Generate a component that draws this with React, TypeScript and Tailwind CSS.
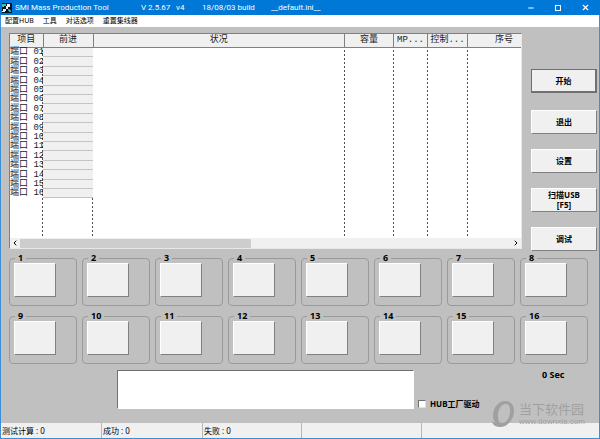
import { useState } from 'react'
import { ChevronLeft, ChevronRight, Minus, X } from 'lucide-react'

const MENUS = ['配置HUB', '工具', '对话选项', '重置集线器']
const PORTS = Array.from({ length: 16 }, (_, i) => i + 1)

const COLUMNS = [
  { label: '项目', width: 'w-[33px]' },
  { label: '前进', width: 'w-[50px]' },
  { label: '状况', width: '' },
  { label: '容量', width: 'w-[49px]' },
  { label: 'MP...', width: 'w-[34px]' },
  { label: '控制...', width: 'w-[40px]' },
  { label: '序号', width: 'w-[73px]' },
]

const STATUS = [
  { label: '测试计算 : 0', width: 'w-[101px]' },
  { label: '成功 : 0', width: 'w-[101px]' },
  { label: '失败 : 0', width: 'w-[99px]' },
  { label: '', width: 'w-[120px]' },
  { label: '', width: 'flex-1' },
]

const PUSH = 'border border-b-[#808080] border-l-white border-r-[#808080] border-t-white bg-[#f0f0f0]'

function AppIcon() {
  return (
    <svg viewBox="0 0 10 10" className="size-[10px] shrink-0">
      <rect width="10" height="10" fill="#06121f" />
      <path d="M0 1h4v2H2v1H0z" fill="#3cc0b8" />
      <path d="M5 1h3v3H6v2H4V3h1z" fill="#f2fbfb" />
      <path d="M1 6h3v2H3v1H0V8h1z" fill="#e4f3f3" />
      <path d="M6 6h2v1h1v2H7V8H6z" fill="#2f9fb4" />
    </svg>
  )
}

function TitleBar() {
  return (
    <header className="flex h-[15px] items-center whitespace-pre bg-[#0078d7] pl-[2px] pr-[10px] font-[Roboto,sans-serif] text-[8px] leading-[15px] text-white">
      <AppIcon />
      <h1 className="w-[129px] pl-[3px]">SMI Mass Production Tool</h1>
      <span className="w-[35px]">V 2.5.67</span>
      <span className="w-[26px]">v4</span>
      <span className="w-[69px]">18/08/03 build</span>
      <span>__default.ini__</span>
      <div className="ml-auto flex items-center gap-[19px]">
        <button aria-label="Minimize"><Minus size={8} strokeWidth={3} /></button>
        <button aria-label="Maximize" className="mx-px size-[6px] border border-white" />
        <button aria-label="Close"><X size={9} strokeWidth={3} /></button>
      </div>
    </header>
  )
}

function PortTable() {
  return (
    <div className="flex-1 self-start overflow-hidden border border-b-[#e8e8e8] border-l-[#808080] border-r-[#e8e8e8] border-t-[#808080] bg-white">
      <div className="h-[204px] overflow-hidden font-['Liberation_Mono','Noto_Sans_CJK_SC',monospace] text-[9px] text-[#222]">
        <table className="h-full w-[calc(100%+20px)] table-fixed border-collapse">
          <colgroup>
            {COLUMNS.map(c => (
              <col
                key={c.label}
                className={`${c.width} bg-[repeating-linear-gradient(#505050_0_2px,transparent_2px_4px)] bg-[length:1px_100%] bg-right bg-no-repeat`}
              />
            ))}
          </colgroup>
          <thead>
            <tr className="h-[13px]">
              {COLUMNS.map(c => (
                <th key={c.label} className="border-b border-r border-[#808080] bg-[#f0f0f0] p-0 font-normal leading-[12px]">
                  {c.label}
                </th>
              ))}
            </tr>
          </thead>
          <tbody>
            {PORTS.map((n, i) => (
              <tr key={n} className={(i % 5) % 2 ? 'h-[10px]' : 'h-[9px]'}>
                <td className="overflow-x-clip whitespace-nowrap p-0 align-bottom leading-[9px]">
                  端口 {String(n).padStart(2, '0')}
                </td>
                <td className="border-b border-[#c4c4c4] bg-[#f0f0f0] p-0" />
                {COLUMNS.slice(2).map(c => <td key={c.label} className="p-0" />)}
              </tr>
            ))}
            <tr>{COLUMNS.map(c => <td key={c.label} className="p-0" />)}</tr>
          </tbody>
        </table>
      </div>
      <div className="flex h-[10px] items-center bg-[#f0f0f0]">
        <button aria-label="Scroll left" className="flex w-[10px] justify-center"><ChevronLeft size={8} strokeWidth={3} /></button>
        <div className="flex-1"><div className="h-[9px] w-[47%] bg-[#cdcdcd]" /></div>
        <button aria-label="Scroll right" className="flex w-[10px] justify-center"><ChevronRight size={8} strokeWidth={3} /></button>
      </div>
    </div>
  )
}

function SideButtons() {
  return (
    <div className="flex w-[66px] flex-col gap-[15px] pt-[36px] text-[8px] font-bold leading-[10px]">
      <button className="mb-[2px] h-[24px] border border-b-2 border-r-2 border-[#707070] bg-[#f0f0f0]">开始</button>
      <button className={`h-[24px] ${PUSH}`}>退出</button>
      <button className={`h-[24px] ${PUSH}`}>设置</button>
      <button className={`h-[24px] ${PUSH}`}>扫描USB<br />[F5]</button>
      <button className={`h-[24px] ${PUSH}`}>调试</button>
    </div>
  )
}

function PortSlots() {
  return (
    <div className="grid grid-cols-8 gap-x-[5px] gap-y-[5px] pl-[8px] pr-[11px] pt-[2px]">
      {PORTS.map(n => (
        <fieldset key={n} className="h-[53px] min-w-0 rounded-[4px] border border-[#9a9a9a] pl-[4px]">
          <legend className="ml-[1px] px-[3px] text-[9px] font-bold leading-[10px]">{n}</legend>
          <button aria-label={`Port ${n}`} className={`block h-[34px] w-[42px] ${PUSH}`} />
        </fieldset>
      ))}
    </div>
  )
}

function Watermark() {
  return (
    <div className="flex items-center gap-[4px] text-[#a0a0a0]">
      <svg viewBox="0 0 24 28" className="h-[28px] w-[24px]" fill="currentColor">
        <path
          fillRule="evenodd"
          d="M14 1c6 0 9 4 9 10 0 8-6 16-14 16-5 0-8-3-8-6 1 1 2 2 3 2-1-2-2-4-2-7C2 8 7 1 14 1zM15 4c-5 0-8 6-8 12 0 4 1 7 4 7 5 0 8-6 8-12 0-4-1-7-4-7z"
        />
      </svg>
      <div className="whitespace-nowrap">
        <div className="text-[13px] leading-[16px]">当下软件园</div>
        <div className="font-['Liberation_Sans',sans-serif] text-[8px] leading-[10px]">www.downxia.com</div>
      </div>
    </div>
  )
}

export default function App() {
  const [hub, setHub] = useState(false)
  const [log, setLog] = useState('')

  return (
    <div className="flex flex-col bg-[#c0c0c0] font-['Noto_Sans','Noto_Sans_CJK_SC',sans-serif] text-black">
      <TitleBar />
      <div className="border-x border-b border-[#3a8fd6]">
        <nav className="flex h-[12px] items-center gap-[9px] bg-white pl-[4px] text-[7px] leading-[12px]">
          {MENUS.map(m => <button key={m}>{m}</button>)}
        </nav>
        <main>
          <div className="flex gap-[9px] pl-[8px] pr-[2px] pt-[6px]">
            <PortTable />
            <SideButtons />
          </div>
          <PortSlots />
          <div className="flex h-[59px] pl-[116px]">
            <textarea
              aria-label="Log"
              value={log}
              onChange={e => setLog(e.target.value)}
              className="mt-[6px] h-[39px] flex-1 resize-none border border-b-white border-l-[#707070] border-r-white border-t-[#707070] bg-white"
            />
            <label className="flex w-[74px] items-center gap-[4px] self-start whitespace-nowrap pl-[4px] pt-[35px] text-[8px] font-bold leading-[10px]">
              <input
                type="checkbox"
                checked={hub}
                onChange={e => setHub(e.target.checked)}
                className="size-[8px] appearance-none border border-l-[#707070] border-r-[#e0e0e0] border-t-[#707070] border-b-[#e0e0e0] bg-white checked:bg-black"
              />
              HUB工厂驱动
            </label>
            <div className="relative w-[111px]">
              <div className="pl-[54px] pt-[6px] text-[9px] font-bold leading-[10px]">0 Sec</div>
              <div className="absolute left-[3px] top-[36px]"><Watermark /></div>
            </div>
          </div>
        </main>
        <footer className="flex h-[15px] bg-[#f0f0f0] text-[8px] leading-[15px]">
          {STATUS.map((s, i) => (
            <div key={i} className={`${s.width} border-r border-[#b8b8b8] pl-[1px] last:border-r-0`}>{s.label}</div>
          ))}
        </footer>
      </div>
    </div>
  )
}
